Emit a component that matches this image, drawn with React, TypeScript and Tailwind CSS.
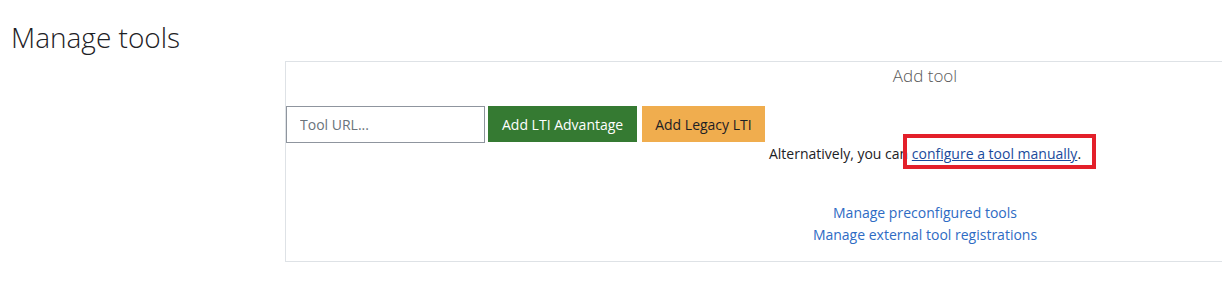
const App = () => {
  return (
    <div className="w-[1222px] h-[290px] overflow-hidden bg-white font-['Open_Sans',sans-serif] text-[#1d2125]">
      <h1 className="pl-[11px] pt-[19px] text-[28px] font-light leading-[36px] text-[#1d2125]">
        Manage tools
      </h1>

      <div className="ml-[285px] mt-[6px] w-[1280px] h-[201px] border border-[#dee2e6]">
        <h3 className="text-center text-[17px] font-light leading-[26px] pt-[1px] text-[#5a5a5a]">
          Add tool
        </h3>

        <div className="mt-[17px] flex items-start">
          <input
            type="text"
            placeholder="Tool URL..."
            className="w-[199px] h-[37px] border border-[#8f959e] px-[13px] text-[14px] text-[#495057] placeholder:text-[#6a737b] outline-none"
          />
          <button className="ml-[3px] h-[36px] px-[14px] bg-[#357a32] text-white text-[14px]">
            Add LTI Advantage
          </button>
          <button className="ml-[5px] h-[36px] px-[13px] bg-[#f0ad4e] text-[#1d2125] text-[14px]">
            Add Legacy LTI
          </button>
        </div>

        <p className="text-center text-[14px] leading-[22px]">
          Alternatively, you can{" "}
          <span className="relative">
            <a href="#" className="text-[#1a4b9c] underline">
              configure a tool manually
            </a>
            .
            <span className="absolute -left-[9px] -right-[15px] -top-[10px] -bottom-[6px] border-[4px] border-[#e3202a]" />
          </span>
        </p>

        <div className="mt-[37px] flex flex-col items-center text-[14px] leading-[22px] text-[#2e6bc4]">
          <a href="#">Manage preconfigured tools</a>
          <a href="#">Manage external tool registrations</a>
        </div>
      </div>
    </div>
  );
};

export default App;
